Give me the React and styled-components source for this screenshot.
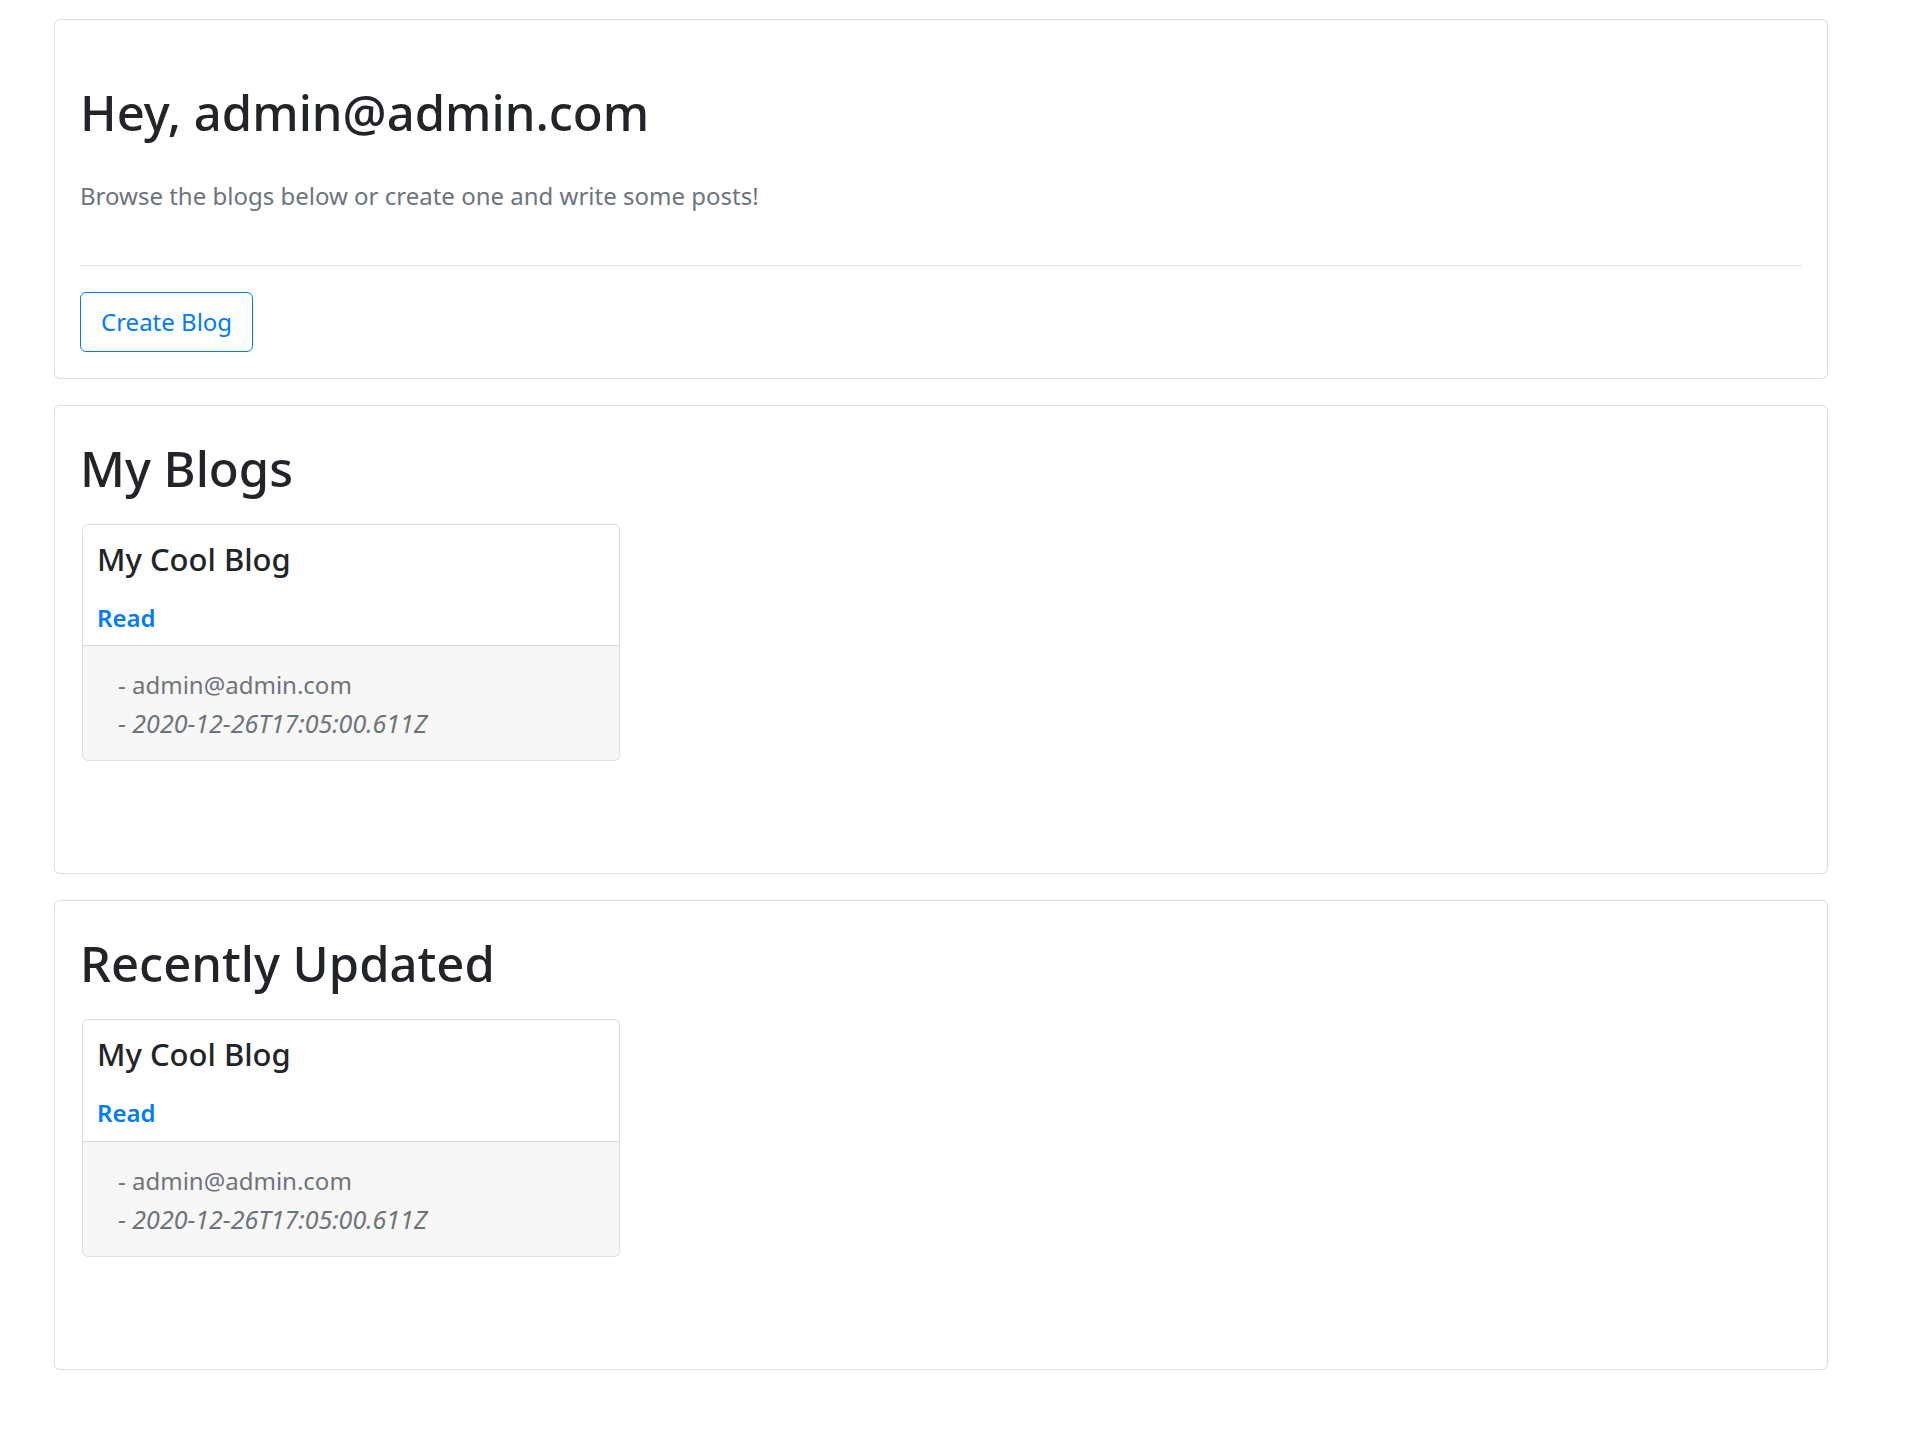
import styled, { createGlobalStyle } from "styled-components";

const GlobalStyle = createGlobalStyle`
  * {
    box-sizing: border-box;
  }

  body {
    margin: 0;
    background: #fff;
    color: #212529;
    font-family: "Segoe UI", "Noto Sans", "Open Sans", sans-serif;
  }
`;

const Page = styled.main`
  width: 1774px;
  margin: 19px 0 0 54px;
  display: flex;
  flex-direction: column;
  gap: 26px;
  padding-bottom: 60px;
`;

const Panel = styled.section`
  border: 1px solid rgba(0, 0, 0, 0.125);
  border-radius: 6px;
  background: #fff;
  padding: ${(p) => p.$pad || "32px 25px 112px"};
`;

const Heading = styled.h1`
  margin: 0 0 ${(p) => p.$gap || "26px"};
  font-size: 49px;
  font-weight: 500;
  line-height: 60px;
  color: #212529;
`;

const Lead = styled.p`
  margin: 0;
  font-size: 24px;
  font-weight: 400;
  line-height: 37.5px;
  color: #6c757d;
`;

const Divider = styled.hr`
  margin: 50px 0 26px;
  border: 0;
  border-top: 1px solid rgba(0, 0, 0, 0.1);
`;

const OutlineButton = styled.button`
  display: inline-block;
  height: 60px;
  padding: 0 20px;
  font-family: inherit;
  font-size: 24px;
  line-height: 58px;
  color: #007bff;
  background: transparent;
  border: 1px solid #007bff;
  border-radius: 6px;
  cursor: pointer;

  &:hover {
    color: #fff;
    background: #007bff;
  }
`;

const BlogGrid = styled.div`
  display: grid;
  grid-template-columns: 538px;
  gap: 26px;
  margin-left: 2px;
`;

const BlogCard = styled.article`
  border: 1px solid rgba(0, 0, 0, 0.125);
  border-radius: 6px;
  overflow: hidden;
  background: #fff;
`;

const BlogBody = styled.div`
  padding: 16px 14px 9px;
  display: flex;
  flex-direction: column;
  align-items: flex-start;
  gap: 21px;
`;

const BlogTitle = styled.h4`
  margin: 0;
  font-size: 31px;
  font-weight: 500;
  line-height: 37px;
  color: #212529;
`;

const ReadLink = styled.a`
  font-size: 24px;
  font-weight: 600;
  line-height: 37.5px;
  color: #007bff;
  text-decoration: none;

  &:hover {
    text-decoration: underline;
  }
`;

const BlogFooter = styled.div`
  padding: 19px 34px 17px 35px;
  background: #f7f7f7;
  border-top: 1px solid rgba(0, 0, 0, 0.125);
  font-size: 24px;
  line-height: 39px;
  color: #6c757d;
`;

const Meta = styled.div`
  font-style: ${(p) => (p.$italic ? "italic" : "normal")};
  font-size: ${(p) => (p.$italic ? "25px" : "24px")};
`;

const blogs = [
  {
    id: 1,
    title: "My Cool Blog",
    author: "admin@admin.com",
    updated: "2020-12-26T17:05:00.611Z",
  },
];

const BlogItem = ({ blog }) => (
  <BlogCard>
    <BlogBody>
      <BlogTitle>{blog.title}</BlogTitle>
      <ReadLink href={`#/blogs/${blog.id}`}>Read</ReadLink>
    </BlogBody>
    <BlogFooter>
      <Meta>- {blog.author}</Meta>
      <Meta $italic>- {blog.updated}</Meta>
    </BlogFooter>
  </BlogCard>
);

const BlogSection = ({ title, items }) => (
  <Panel>
    <Heading>{title}</Heading>
    <BlogGrid>
      {items.map((b) => (
        <BlogItem key={b.id} blog={b} />
      ))}
    </BlogGrid>
  </Panel>
);

const App = () => {
  const user = "admin@admin.com";

  return (
    <>
      <GlobalStyle />
      <Page>
        <Panel $pad="62px 25px 26px">
          <Heading $gap="35px">Hey, {user}</Heading>
          <Lead>Browse the blogs below or create one and write some posts!</Lead>
          <Divider />
          <OutlineButton>Create Blog</OutlineButton>
        </Panel>
        <BlogSection title="My Blogs" items={blogs} />
        <BlogSection title="Recently Updated" items={blogs} />
      </Page>
    </>
  );
};

export default App;
